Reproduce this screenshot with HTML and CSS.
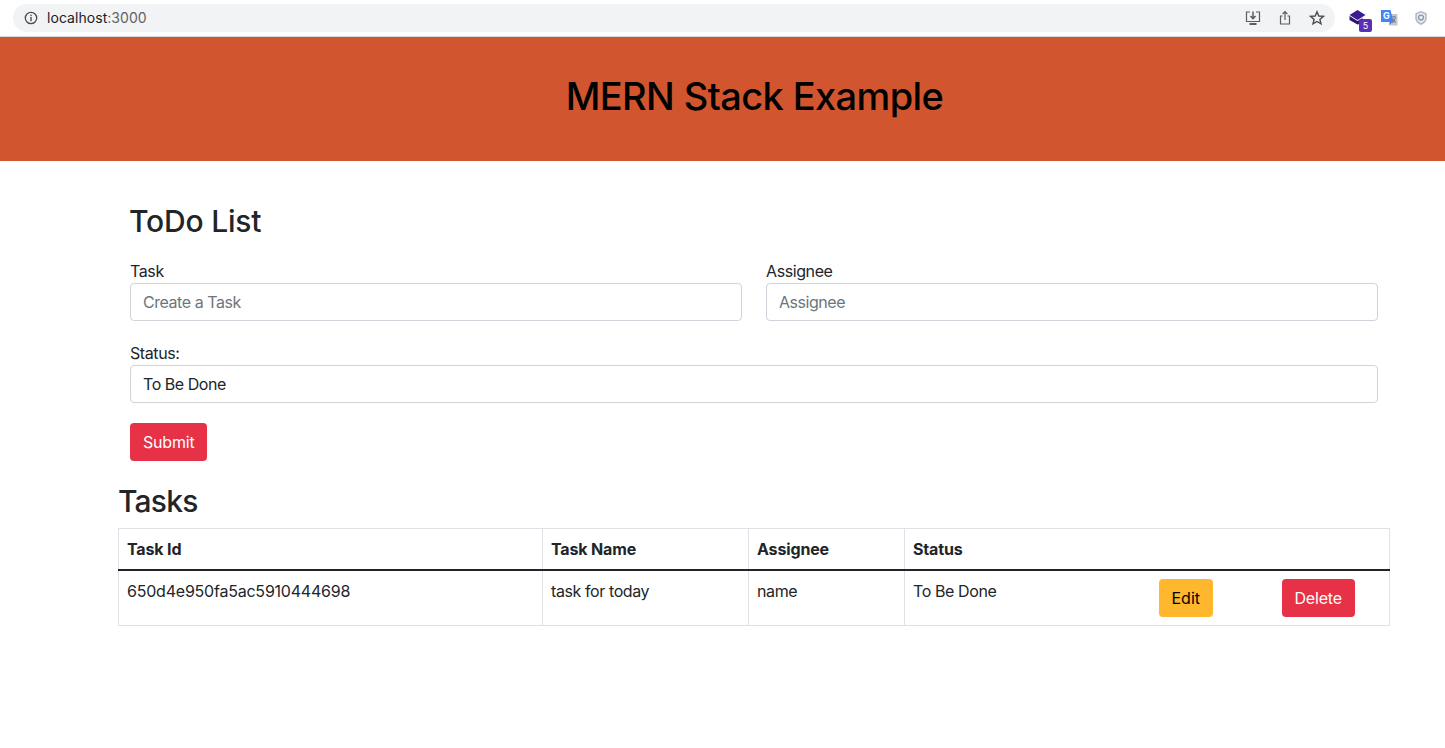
FILE: index.html
```html
<!DOCTYPE html>
<html lang="en">
<head>
    <meta charset="UTF-8">
    <meta name="viewport" content="width=device-width, initial-scale=1.0">
    <title>MERN Stack Example</title>
    <link rel="stylesheet" href="styles.css">
</head>
<body>

    <div class="browser-bar">
        <div class="url-pill">
            <svg class="info-icon" width="14" height="14" viewBox="0 0 14 14">
                <circle cx="7" cy="7" r="5.7" fill="none" stroke="#4a4d51" stroke-width="1.3"/>
                <rect x="6.3" y="6" width="1.4" height="4.2" fill="#4a4d51"/>
                <rect x="6.3" y="3.7" width="1.4" height="1.4" fill="#4a4d51"/>
            </svg>
            <span class="url-host">localhost<span class="url-port">:3000</span></span>
            <div class="pill-icons">
                <svg width="16" height="16" viewBox="0 0 16 16" fill="none" stroke="#5a5d61" stroke-width="1.2">
                    <path d="M5 2H1.500v9.500h13V2H11"/>
                    <path d="M8 1.500v7M5.400 6 8 8.600 10.600 6" stroke-width="1.500"/>
                    <path d="M4.500 14h7" stroke-width="2"/>
                </svg>
                <svg width="14" height="16" viewBox="0 0 14 16" fill="none" stroke="#5a5d61" stroke-width="1.2">
                    <path d="M4.500 6H2.500v8h9V6h-2"/>
                    <path d="M7 10V2M4.600 4 7 1.600 9.400 4"/>
                </svg>
                <svg width="16" height="16" viewBox="0 0 16 16" fill="none" stroke="#4a4d51" stroke-width="1.400">
                    <path d="M8 1.800 9.800 6l4.600.400-3.500 3 1.100 4.500L8 11.500l-4 2.400 1.100-4.500-3.500-3L6.200 6z"/>
                </svg>
            </div>
        </div>
        <div class="ext-icons">
            <div class="ext-stack">
                <svg width="20" height="18" viewBox="0 0 20 18">
                    <path d="M9.500 1 17.500 6 9.500 11 1.500 6z" fill="#3c1a94"/>
                    <path d="M1.500 7 9.500 12l5-3v5l-5 1.500L1.500 11z" fill="#2e1478"/>
                </svg>
                <span class="ext-badge">5</span>
            </div>
            <div class="translate-icon">
                <svg width="17" height="18" viewBox="0 0 17 18">
                    <path d="M7 5h9.500v11.500H9z" fill="#c3c7cc"/>
                    <path d="M11 8h4M13 7v1M11.500 14l3-5M12 9.500l2.500 4.500" fill="none" stroke="#6b7075" stroke-width="0.900"/>
                    <path d="M0 1h9.500l3 12H0z" fill="#4285f4"/>
                    <path d="M9 13 8 16.500l3-3.500z" fill="#3367c7"/>
                </svg>
                <span class="translate-letter">G</span>
            </div>
            <svg width="14" height="16" viewBox="0 0 16 18">
                <path d="M8 1 14.500 3.500V9c0 4-3 6.500-6.500 8-3.500-1.500-6.500-4-6.500-8V3.500z" fill="#aeb8c6"/>
                <path d="M8 2.800 12.800 4.600V9c0 2.900-2.100 4.800-4.800 6-2.700-1.200-4.800-3.100-4.800-6V4.600z" fill="#e8ecf1"/>
                <circle cx="8" cy="8.500" r="2.800" fill="none" stroke="#8d99aa" stroke-width="1.500"/>
            </svg>
        </div>
    </div>

    <header class="app-header">
        <h1>MERN Stack Example</h1>
    </header>

    <main class="container">
        <form class="todo-form">
            <h2>ToDo List</h2>
            <div class="form-row">
                <div class="form-col">
                    <label for="task">Task</label>
                    <input type="text" id="task" class="form-control" placeholder="Create a Task">
                </div>
                <div class="form-col">
                    <label for="assignee">Assignee</label>
                    <input type="text" id="assignee" class="form-control" placeholder="Assignee">
                </div>
            </div>
            <div class="form-group">
                <label for="status">Status:</label>
                <div id="status" class="form-control">To Be Done</div>
            </div>
            <button type="button" class="btn btn-danger">Submit</button>
        </form>

        <h2 class="tasks-title">Tasks</h2>
        <table class="task-table">
            <thead>
                <tr>
                    <th class="col-id">Task Id</th>
                    <th class="col-name">Task Name</th>
                    <th class="col-assignee">Assignee</th>
                    <th class="col-status">Status</th>
                    <th class="col-edit"></th>
                    <th class="col-delete"></th>
                </tr>
            </thead>
            <tbody>
                <tr>
                    <td class="task-id">650d4e950fa5ac5910444698</td>
                    <td>task for today</td>
                    <td>name</td>
                    <td class="no-side">To Be Done</td>
                    <td class="no-side"><button type="button" class="btn btn-warning">Edit</button></td>
                    <td class="no-side"><button type="button" class="btn btn-danger">Delete</button></td>
                </tr>
            </tbody>
        </table>
    </main>

</body>
</html>
```

FILE: styles.css
```css
* {
    box-sizing: border-box;
}

body {
    font-family: 'Inter', 'Liberation Sans', sans-serif;
    font-size: 16px;
    line-height: 1.5;
    letter-spacing: -0.4px;
    color: #212529;
    background-color: #fff;
    margin: 0;
}

.browser-bar {
    display: flex;
    align-items: center;
    height: 37px;
    padding: 0 15px 1px 13px;
    background-color: #fff;
    border-bottom: 1px solid #d9dadc;
}

.url-pill {
    display: flex;
    align-items: center;
    width: 1322px;
    height: 28px;
    padding: 0 10px 0 11px;
    background-color: #f1f3f4;
    border-radius: 14px;
}

.info-icon {
    margin-right: 9px;
}

.url-host {
    font-size: 14px;
    letter-spacing: 0.05px;
    color: #202124;
}

.url-port {
    color: #5f6368;
}

.pill-icons {
    display: flex;
    align-items: center;
    gap: 17px;
    margin-left: auto;
}

.ext-icons {
    display: flex;
    align-items: center;
    gap: 13px;
    margin-left: 13px;
}

.ext-stack {
    position: relative;
    width: 20px;
    height: 18px;
}

.ext-badge {
    position: absolute;
    right: -4px;
    bottom: -5px;
    width: 13px;
    height: 13px;
    background-color: #5b2fb5;
    border-radius: 2px;
    color: #fff;
    font-size: 9px;
    letter-spacing: 0;
    line-height: 13px;
    text-align: center;
}

.translate-icon {
    position: relative;
    width: 17px;
    height: 18px;
    margin-right: 3px;
}

.translate-letter {
    position: absolute;
    top: 1px;
    left: 1px;
    width: 9px;
    color: #fff;
    font-size: 9px;
    font-weight: 700;
    letter-spacing: 0;
    line-height: 12px;
    text-align: center;
}

.app-header {
    display: flex;
    justify-content: center;
    align-items: center;
    height: 124px;
    padding: 0 0 4px 64px;
    background-color: #d1562f;
}

.app-header h1 {
    margin: 0;
    font-size: 38px;
    font-weight: 450;
    letter-spacing: -0.6px;
    line-height: 1.2;
    color: #000;
}

.container {
    padding: 0 55px 0 118px;
}

.todo-form {
    padding: 42px 12px 0;
}

h2 {
    margin: 0;
    font-size: 30px;
    font-weight: 450;
    letter-spacing: -0.8px;
    line-height: 1.2;
}

.todo-form h2 {
    margin: 0 0 20px -1px;
    letter-spacing: -0.2px;
}

.form-row {
    display: flex;
    gap: 24px;
    margin-bottom: 20px;
}

.form-col {
    flex: 1;
}

.form-group {
    margin-bottom: 20px;
}

label {
    display: block;
    line-height: 24px;
}

.form-control {
    display: block;
    width: 100%;
    height: 38px;
    padding: 6px 12px;
    font-family: inherit;
    font-size: 16px;
    letter-spacing: -0.45px;
    line-height: 24px;
    color: #212529;
    background-color: #fff;
    border: 1px solid #ced4da;
    border-radius: 4px;
}

.form-control::placeholder {
    color: #6c757d;
    opacity: 1;
}

.btn {
    height: 38px;
    padding: 6px 13px;
    font-family: inherit;
    font-size: 16px;
    letter-spacing: -0.2px;
    line-height: 24px;
    border: none;
    border-radius: 4px;
    cursor: pointer;
}

.btn-danger {
    background-color: #e63146;
    color: #fff;
}

.btn-warning {
    background-color: #ffb82e;
    color: #000;
    letter-spacing: 0;
}

.tasks-title {
    margin-top: 22px;
    margin-bottom: 9px;
}

.task-table {
    width: 100%;
    border-collapse: collapse;
    table-layout: fixed;
    font-size: 16px;
}

.task-table th,
.task-table td {
    padding: 8px;
    text-align: left;
    vertical-align: top;
    border: 1px solid #dee2e6;
}

.task-table th {
    letter-spacing: -0.15px;
}

.task-table td.task-id {
    letter-spacing: -0.22px;
}

.task-table thead th {
    border-bottom: 2px solid #212529;
    height: 41px;
}

.task-table th.col-status,
.task-table th.col-edit,
.task-table th.col-delete,
.task-table td.no-side {
    border-left: none;
    border-right: none;
}

.task-table th.col-delete,
.task-table td:last-child {
    border-right: 1px solid #dee2e6;
}

.col-id { width: 424px; }
.col-name { width: 206px; }
.col-assignee { width: 156px; }
.col-status { width: 246px; }
.col-edit { width: 123px; }
```
